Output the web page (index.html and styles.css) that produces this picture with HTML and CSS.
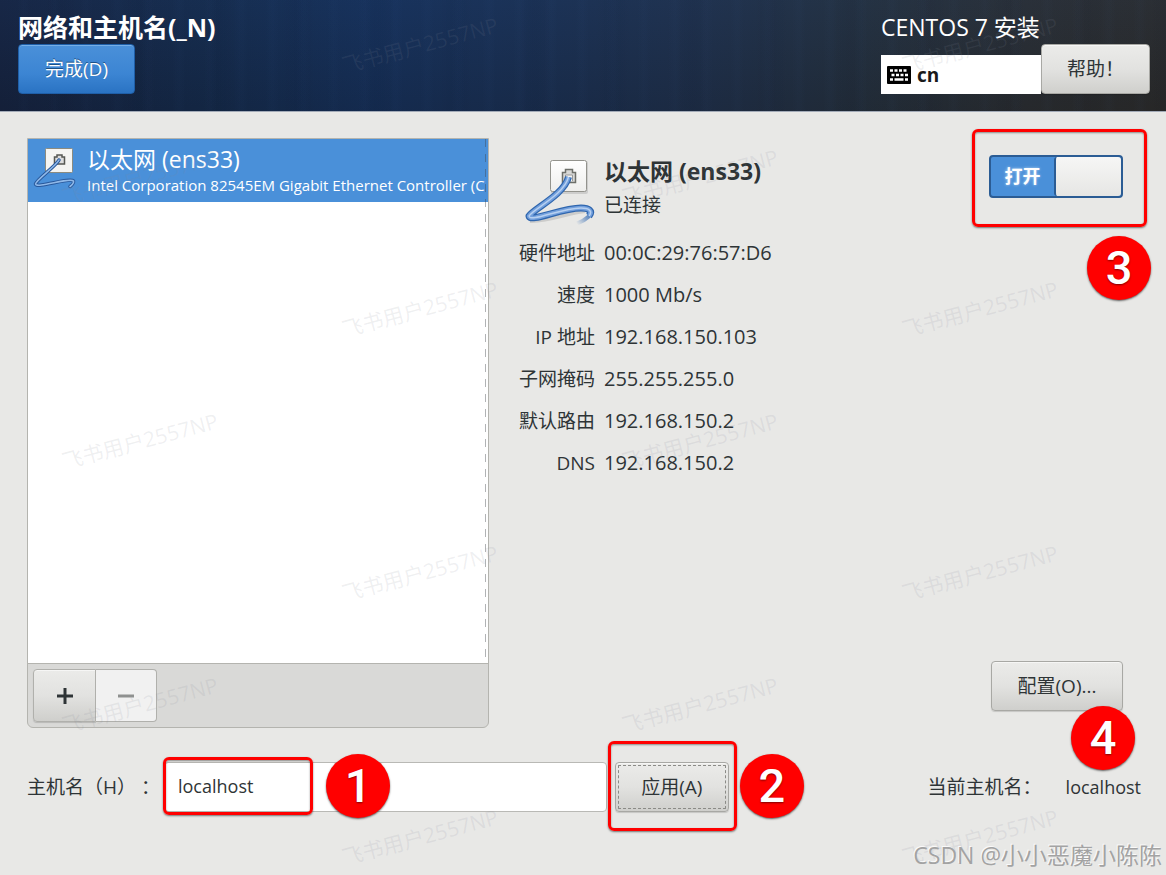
FILE: index.html
```
<!DOCTYPE html>
<html lang="zh-CN">
<head>
    <meta charset="UTF-8">
    <meta name="viewport" content="width=device-width, initial-scale=1.0">
    <title>网络和主机名 - CentOS 7 安装</title>
    <link rel="stylesheet" href="styles.css">
</head>
<body>
    <header class="header">
        <div class="header-left">
            <h1 class="header-title">网络和主机名(_N)</h1>
            <button type="button" class="btn btn-primary">完成(D)</button>
        </div>
        <div class="header-right">
            <div class="product">CENTOS 7 安装</div>
            <div class="header-tools">
                <div class="keyboard">
                    <svg class="keyboard-icon" width="24" height="18" viewBox="0 0 24 18" aria-hidden="true">
                        <rect width="24" height="18" rx="1" fill="#000"/>
                        <path d="M3 4.500h3M7.500 4.500h3M12 4.500h3M16.500 4.500h3M4.500 9h3M9 9h3M13.500 9h3M18 9h3M3 13.500h3M7.500 13.500h9M18 13.500h3" stroke="#fff" stroke-width="2.600"/>
                    </svg>
                    <span>cn</span>
                </div>
                <button type="button" class="btn btn-help">帮助！</button>
            </div>
        </div>
    </header>

    <main class="content">
        <div class="panels">
            <!-- Device list -->
            <section class="devices">
                <div class="device-list">
                    <div class="device selected">
                        <svg class="device-icon" width="44" height="46" viewBox="0 0 44 46" aria-hidden="true">
                            <rect x="12.500" y="2.500" width="27" height="24" rx="1" fill="#f4f4f2" stroke="#8b8b80"/>
                            <path d="M21.500 18v-7h2.500v-2h5v2h2.500v7z" fill="#ddd" stroke="#555753" stroke-width="1.500"/>
                            <path d="M26 14C23 20 3 34 2.500 38C3 43 37 31 40.500 35C41 37 39 39 37 40.500" fill="none" stroke="#28589b" stroke-width="3.500" stroke-linecap="round"/>
                            <path d="M26 14C23 20 3 34 2.500 38C3 43 37 31 40.500 35C41 37 39 39 37 40.500" fill="none" stroke="#8fb8e8" stroke-width="1.600" stroke-linecap="round"/>
                        </svg>
                        <div class="device-text">
                            <div class="device-name">以太网 (ens33)</div>
                            <div class="device-desc">Intel Corporation 82545EM Gigabit Ethernet Controller (C</div>
                        </div>
                    </div>
                </div>
                <div class="device-toolbar">
                    <button type="button" class="btn btn-add" aria-label="添加">
                        <svg width="16" height="16" viewBox="0 0 16 16" aria-hidden="true"><path d="M0 8h16M8 0v16" stroke="#2e3436" stroke-width="3"/></svg>
                    </button>
                    <button type="button" class="btn btn-remove" aria-label="移除" disabled>
                        <svg width="16" height="16" viewBox="0 0 16 16" aria-hidden="true"><path d="M0 8h16" stroke="#8f9190" stroke-width="3"/></svg>
                    </button>
                </div>
            </section>

            <!-- Selected device -->
            <section class="details">
                <div class="info">
                    <div class="info-head">
                        <svg class="info-icon" width="72" height="68" viewBox="0 0 72 68" aria-hidden="true">
                            <defs>
                                <linearGradient id="box" x1="0" y1="0" x2="0" y2="1">
                                    <stop offset="0" stop-color="#fff"/>
                                    <stop offset="1" stop-color="#eeeeec"/>
                                </linearGradient>
                                <linearGradient id="tail" gradientUnits="userSpaceOnUse" x1="67" y1="55" x2="54" y2="67">
                                    <stop offset="0" stop-color="#3a6fb5"/>
                                    <stop offset="1" stop-color="#3a6fb5" stop-opacity="0"/>
                                </linearGradient>
                            </defs>
                            <rect x="28" y="4" width="37" height="33" rx="2" fill="#bbb" opacity=".6"/>
                            <rect x="27.500" y="3.500" width="36" height="31" rx="2" fill="url(#box)" stroke="#93938d"/>
                            <path d="M39.500 25.500v-10h3v-3h7v3h3v10z" fill="#d8d8d6" stroke="#6d6f6a" stroke-width="1.500"/>
                            <path d="M42.500 24v-6h7v6" fill="#f5f5f3" stroke="#999"/>
                            <path d="M7 64C24 65 48 55 62 54" fill="none" stroke="#999" stroke-width="4" opacity=".35"/>
                            <path d="M68 53C70 57 63 63 54 66.500" fill="none" stroke="url(#tail)" stroke-width="4"/>
                            <path d="M45.500 20C41 38 10 52 6 59C7 66 38 51 58 51C66 51 70 54 66 59" fill="none" stroke="#2f66ae" stroke-width="7" stroke-linejoin="round"/>
                            <path d="M45.500 20C41 38 10 52 6 59C7 66 38 51 58 51C66 51 70 54 66 59" fill="none" stroke="#729fdc" stroke-width="4.500" stroke-linejoin="round"/>
                            <path d="M45.500 20C41 38 10 52 6 59C7 66 38 51 58 51C66 51 70 54 66 59" fill="none" stroke="#b7d0f0" stroke-width="1.500" stroke-linejoin="round"/>
                        </svg>
                        <div>
                            <h2 class="info-title">以太网 (ens33)</h2>
                            <div class="info-status">已连接</div>
                        </div>
                    </div>
                    <dl class="info-grid">
                        <dt>硬件地址</dt><dd>00:0C:29:76:57:D6</dd>
                        <dt>速度</dt><dd>1000 Mb/s</dd>
                        <dt>IP 地址</dt><dd>192.168.150.103</dd>
                        <dt>子网掩码</dt><dd>255.255.255.0</dd>
                        <dt>默认路由</dt><dd>192.168.150.2</dd>
                        <dt>DNS</dt><dd>192.168.150.2</dd>
                    </dl>
                </div>
                <div class="actions">
                    <div class="marked">
                        <label class="switch">
                            <input type="checkbox" class="switch-input" checked>
                            <span class="switch-text">打开</span>
                            <span class="switch-knob"></span>
                        </label>
                        <span class="frame frame-switch"></span>
                        <span class="badge badge-3">3</span>
                    </div>
                    <div class="marked">
                        <button type="button" class="btn btn-config">配置(O)...</button>
                        <span class="badge badge-4">4</span>
                    </div>
                </div>
            </section>
        </div>

        <div class="host-row">
            <form class="host-form">
                <label class="host-label" for="hostname">主机名（H） ：</label>
                <div class="marked host-field">
                    <input type="text" id="hostname" class="host-input" value="localhost">
                    <span class="frame frame-host"></span>
                    <span class="badge badge-1">1</span>
                </div>
                <div class="marked">
                    <button type="button" class="btn btn-apply">应用(A)</button>
                    <span class="frame frame-apply"></span>
                    <span class="badge badge-2">2</span>
                </div>
            </form>
            <div class="host-current">
                <span>当前主机名：</span>
                <span class="host-value">localhost</span>
            </div>
        </div>
    </main>

    <!-- Watermarks -->
    <div class="watermark">
        <div class="watermark-row"><span>飞书用户2557NP</span><span>飞书用户2557NP</span></div>
        <div class="watermark-row"><span>飞书用户2557NP</span><span>飞书用户2557NP</span></div>
        <div class="watermark-row"><span>飞书用户2557NP</span><span>飞书用户2557NP</span></div>
        <div class="watermark-row"><span>飞书用户2557NP</span><span>飞书用户2557NP</span></div>
        <div class="watermark-row"><span>飞书用户2557NP</span><span>飞书用户2557NP</span></div>
        <div class="watermark-row"><span>飞书用户2557NP</span><span>飞书用户2557NP</span></div>
        <div class="watermark-row"><span>飞书用户2557NP</span><span>飞书用户2557NP</span></div>
    </div>
    <div class="credit">CSDN @小小恶魔小陈陈</div>
</body>
</html>
```

FILE: styles.css
```
* {
    box-sizing: border-box;
}

body {
    position: relative;
    display: flex;
    flex-direction: column;
    min-height: 100vh;
    margin: 0;
    background-color: #e8e8e6;
    color: #2e3436;
    font-family: "Open Sans", "Noto Sans CJK SC", sans-serif;
    font-size: 19px;
    line-height: 26px;
}

h1,
h2,
dl,
dd {
    margin: 0;
}

/* Buttons */
.btn {
    display: flex;
    align-items: center;
    justify-content: center;
    height: 50px;
    padding: 0 24px;
    border: 1px solid #a8a8a4;
    border-radius: 4px;
    background: linear-gradient(#ebebe9, #e2e2e0 50%, #cfcfcc);
    box-shadow: inset 0 1px #f6f6f5, 0 1px 1px rgba(0, 0, 0, 0.15);
    color: #2e3436;
    font: inherit;
    white-space: nowrap;
    cursor: pointer;
}

.btn-primary {
    width: 117px;
    border-color: #1f5fa8;
    background: linear-gradient(#4a90d9, #3c85d3 60%, #2a73c3);
    box-shadow: inset 0 1px #76aee6;
    color: #fff;
    text-shadow: 0 -1px #1c5187;
}

/* Header */
.header {
    display: flex;
    justify-content: space-between;
    height: 112px;
    padding: 14px 16px 0 18px;
    border-bottom: 1px solid #a3abb8;
    background:
        repeating-linear-gradient(90deg, transparent 0 17px, rgba(80, 130, 210, 0.02) 23px 25px, transparent 31px),
        repeating-linear-gradient(90deg, transparent 0 43px, rgba(0, 5, 25, 0.04) 58px 63px, transparent 79px),
        linear-gradient(rgba(40, 90, 160, 0.08), rgba(0, 0, 0, 0.1)),
        linear-gradient(90deg, #16233f, #152a4a 18%, #162f57 32%, #1a2f51 45%, #1f2f49 60%, #242f3c 74%, #2a2d31 88%, #2b2b2b);
    color: #fff;
}

.header-title {
    margin-bottom: 4px;
    font-size: 25px;
    font-weight: 700;
}

.product {
    font-size: 23px;
}

.header-tools {
    display: flex;
    align-items: flex-end;
    margin-top: 4px;
}

.keyboard {
    display: flex;
    align-items: center;
    gap: 6px;
    width: 160px;
    height: 39px;
    padding-left: 6px;
    background-color: #fff;
    color: #1a1a1a;
    font-weight: 700;
}

.btn-help {
    width: 109px;
}

/* Main content */
.content {
    display: flex;
    flex: 1;
    flex-direction: column;
    gap: 34px;
    padding: 26px 25px 63px 27px;
}

.panels {
    display: grid;
    flex: 1;
    grid-template-columns: minmax(0, 462fr) minmax(0, 626fr);
    gap: 26px;
}

.devices {
    display: flex;
    flex-direction: column;
    overflow: hidden;
    border: 1px solid #b4b4af;
    border-radius: 0 0 6px 6px;
    background-color: #d9d9d7;
}

.device-list {
    position: relative;
    flex: 1;
    border-bottom: 1px solid #b4b4af;
    background-color: #fff;
}

.device-list::after {
    content: "";
    position: absolute;
    top: 0;
    right: 2px;
    bottom: 0;
    width: 1px;
    background: repeating-linear-gradient(rgba(60, 65, 70, 0.4) 0 8px, transparent 8px 15px);
}

.device {
    display: flex;
    gap: 10px;
    height: 63px;
    padding: 7px 0 0 5px;
}

.device.selected {
    background-color: #4a90d9;
    color: #fff;
}

.device-icon {
    flex: none;
}

.device-text {
    min-width: 0;
    overflow: hidden;
    white-space: nowrap;
}

.device-name {
    font-size: 23px;
}

.device-desc {
    font-size: 15px;
}

.device-toolbar {
    display: flex;
    height: 63px;
    padding: 5px;
}

.device-toolbar .btn {
    width: 61px;
    height: 53px;
    padding: 0;
    border-color: #b0b0ac;
}

.device-toolbar .btn-add {
    width: 63px;
    border-radius: 4px 0 0 4px;
}

.device-toolbar .btn-remove {
    border-left: 0;
    border-radius: 0 4px 4px 0;
    background: #f1f1f1;
    box-shadow: none;
}

.details {
    display: flex;
    justify-content: space-between;
    padding: 17px 18px 17px 0;
}

.info-head {
    display: grid;
    grid-template-columns: 80px auto;
    column-gap: 9px;
}

.info-icon {
    justify-self: end;
    margin-top: 2px;
}

.info-title {
    margin: 3px 0 8px;
    font-size: 23px;
    font-weight: 700;
}

.info-grid {
    display: grid;
    grid-template-columns: 80px auto;
    column-gap: 9px;
    margin-top: 7px;
    line-height: 42px;
}

.info-grid dt {
    text-align: right;
    white-space: nowrap;
}

.info-grid dd {
    font-size: 20px;
}

.actions {
    display: flex;
    flex-direction: column;
    align-items: flex-end;
    justify-content: space-between;
}

.switch {
    position: relative;
    display: flex;
    width: 134px;
    height: 43px;
    border: 2px solid #2b5c94;
    border-radius: 4px;
    background-color: #4a90d9;
    cursor: pointer;
}

.switch-input {
    position: absolute;
    inset: 0;
    width: 100%;
    height: 100%;
    margin: 0;
    opacity: 0;
}

.switch-text {
    flex: 1;
    color: #fff;
    font-size: 18px;
    font-weight: 700;
    line-height: 38px;
    text-align: center;
    text-shadow: 0 0 3px rgba(255, 255, 255, 0.6);
}

.switch-knob {
    width: 67px;
    border-left: 2px solid #2b5c94;
    border-radius: 3px;
    background: linear-gradient(#f6f6f5, #e6e6e4);
}

.btn-config {
    width: 132px;
}

/* Host name row */
.host-row {
    display: flex;
    align-items: center;
    justify-content: space-between;
    height: 50px;
    white-space: nowrap;
}

.host-form {
    display: flex;
    align-items: center;
    width: 63%;
}

.host-label {
    width: 137px;
}

.host-field {
    flex: 1;
    margin-right: 8px;
}

.host-input {
    display: block;
    width: 100%;
    height: 50px;
    padding: 0 13px 2px;
    border: 1px solid #b9b9b5;
    border-radius: 4px;
    background-color: #fff;
    color: #2e3436;
    font: inherit;
    font-size: 18px;
}

.btn-apply {
    width: 114px;
    outline: 1px dashed #8b8b87;
    outline-offset: -4px;
}

.host-current {
    display: flex;
    gap: 24px;
}

.host-value {
    font-size: 18px;
}

/* Red frames and step numbers */
.marked {
    position: relative;
}

.frame {
    position: absolute;
    border: 3px solid #f00;
    border-radius: 6px;
    box-shadow: 0 1px 2px rgba(0, 0, 0, 0.5), inset 0 1px 2px rgba(0, 0, 0, 0.4);
    pointer-events: none;
}

.frame-switch {
    inset: -26px -24px -29px -17px;
}

.frame-host {
    top: -5px;
    left: -1px;
    width: 150px;
    height: 58px;
}

.frame-apply {
    inset: -21px -8px -19px -7px;
}

.badge {
    position: absolute;
    z-index: 1;
    width: 64px;
    height: 64px;
    border-radius: 50%;
    background-color: #f00;
    box-shadow: 0 1px 2px rgba(0, 0, 0, 0.6);
    color: #fff;
    font-family: Roboto, sans-serif;
    font-size: 47px;
    font-weight: 500;
    line-height: 64px;
    text-align: center;
    text-shadow: 0 1px 2px rgba(0, 0, 0, 0.5);
}

.badge-1 {
    top: -8px;
    left: 162px;
}

.badge-2 {
    top: -8px;
    right: -75px;
}

.badge-3 {
    top: 81px;
    right: -28px;
}

.badge-4 {
    top: 45px;
    right: -12px;
}

/* Watermarks */
.watermark {
    position: absolute;
    top: 0;
    right: 0;
    bottom: 0;
    left: 0;
    z-index: 2;
    overflow: hidden;
    pointer-events: none;
}

.watermark-row {
    display: flex;
    gap: 280px;
    height: 132px;
}

.watermark-row:first-child {
    margin-top: -21px;
}

.watermark-row:nth-child(odd) {
    padding-left: 280px;
}

.watermark-row span {
    flex: none;
    width: 280px;
    color: rgba(130, 135, 150, 0.13);
    font-size: 21px;
    line-height: 132px;
    text-align: center;
    transform: rotate(-15deg);
}

.credit {
    position: absolute;
    right: 4px;
    bottom: 7px;
    z-index: 3;
    color: #a3a3a3;
    font-size: 23px;
    text-shadow: -1px -1px #fafafa;
    white-space: nowrap;
}
```
